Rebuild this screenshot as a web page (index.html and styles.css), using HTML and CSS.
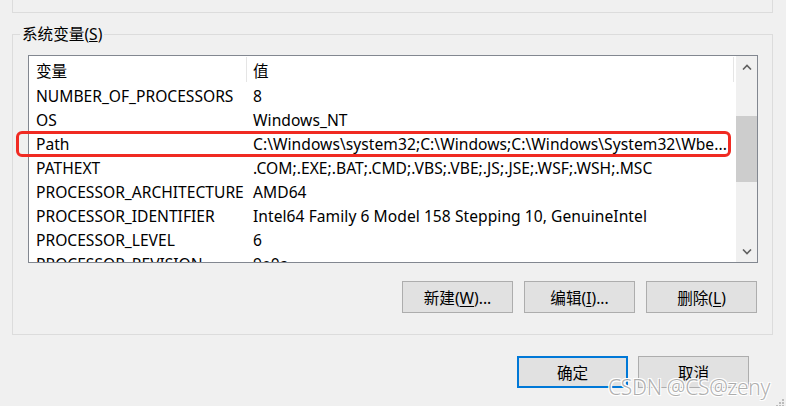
FILE: index.html
```html
<!DOCTYPE html>
<html lang="zh-CN">
<head>
<meta charset="utf-8">
<title>系统变量</title>
<link rel="stylesheet" href="styles.css">
</head>
<body>
<div class="dialog">
  <div class="top-box"></div>

  <section class="group">
    <div class="group-title">系统变量(<u>S</u>)</div>

    <div class="list">
      <div class="list-body">
        <div class="list-head">
          <div class="hcell">变量</div>
          <div class="hcell">值</div>
        </div>
        <div class="row"><div class="c1">NUMBER_OF_PROCESSORS</div><div class="c2">8</div></div>
        <div class="row"><div class="c1">OS</div><div class="c2">Windows_NT</div></div>
        <div class="row"><div class="c1">Path</div><div class="c2">C:\Windows\system32;C:\Windows;C:\Windows\System32\Wbe...</div></div>
        <div class="row"><div class="c1">PATHEXT</div><div class="c2">.COM;.EXE;.BAT;.CMD;.VBS;.VBE;.JS;.JSE;.WSF;.WSH;.MSC</div></div>
        <div class="row"><div class="c1">PROCESSOR_ARCHITECTURE</div><div class="c2">AMD64</div></div>
        <div class="row"><div class="c1">PROCESSOR_IDENTIFIER</div><div class="c2">Intel64 Family 6 Model 158 Stepping 10, GenuineIntel</div></div>
        <div class="row"><div class="c1">PROCESSOR_LEVEL</div><div class="c2">6</div></div>
        <div class="row"><div class="c1">PROCESSOR_REVISION</div><div class="c2">9e0a</div></div>
      </div>
      <div class="scrollbar">
        <div class="sb-arrow">
          <svg width="10" height="6" viewBox="0 0 10 6"><path d="M1 5.5 L5 1.5 L9 5.5" fill="none" stroke="#606060" stroke-width="1.6"/></svg>
        </div>
        <div class="sb-track">
          <div class="sb-thumb"></div>
        </div>
        <div class="sb-arrow">
          <svg width="10" height="6" viewBox="0 0 10 6"><path d="M1 0.5 L5 4.5 L9 0.5" fill="none" stroke="#606060" stroke-width="1.6"/></svg>
        </div>
      </div>
      <div class="highlight"></div>
    </div>

    <div class="btn-row">
      <button class="btn">新建(<u>W</u>)...</button>
      <button class="btn">编辑(<u>I</u>)...</button>
      <button class="btn">删除(<u>L</u>)</button>
    </div>
  </section>

  <div class="footer">
    <button class="btn btn-default">确定</button>
    <button class="btn">取消</button>
  </div>

  <div class="watermark">CSDN @CS@zeny</div>
  <div class="grip">
    <svg width="12" height="12" viewBox="0 0 12 12">
      <g fill="#bcbcbc">
        <rect x="9" y="0" width="2" height="2"/>
        <rect x="6" y="3" width="2" height="2"/><rect x="9" y="3" width="2" height="2"/>
        <rect x="3" y="6" width="2" height="2"/><rect x="6" y="6" width="2" height="2"/><rect x="9" y="6" width="2" height="2"/>
        <rect x="0" y="9" width="2" height="2"/><rect x="3" y="9" width="2" height="2"/><rect x="6" y="9" width="2" height="2"/><rect x="9" y="9" width="2" height="2"/>
      </g>
    </svg>
  </div>
</div>
</body>
</html>
```
FILE: styles.css
```css
* { box-sizing: border-box; }

html, body {
  margin: 0;
  padding: 0;
  background: #f0f0f0;
}

body {
  font-family: "Noto Sans", "Noto Sans CJK SC", sans-serif;
  font-size: 15.6px;
  color: #000;
}

.dialog {
  position: relative;
  width: 786px;
  height: 406px;
  overflow: hidden;
}

.top-box {
  height: 13px;
  margin: 0 13px 0 12px;
  border: 1px solid #dcdcdc;
  border-top: none;
}

.group {
  margin: 21px 13px 0 12px;
  border: 1px solid #dcdcdc;
  padding-bottom: 21px;
}

.group-title {
  width: fit-content;
  margin: -11px 0 0 7px;
  padding: 0 2px;
  line-height: 20px;
  background: #f0f0f0;
}

.list {
  position: relative;
  display: flex;
  height: 208px;
  margin: 11px 14px 0 15px;
  border: 1px solid #828790;
  background: #fff;
}

.list-body {
  flex: 1;
  overflow: hidden;
  white-space: nowrap;
}

.list-head {
  display: grid;
  grid-template-columns: 218px 487px;
  height: 27px;
  align-items: center;
}

.hcell {
  height: 25px;
  line-height: 28px;
  padding-left: 7px;
  border-right: 1px solid #e5e5e5;
}
.hcell + .hcell { padding-left: 6px; }

.row {
  display: grid;
  grid-template-columns: 218px 1fr;
  height: 24px;
  line-height: 26px;
  overflow: hidden;
}

.c1 { padding-left: 7px; }
.c2 { padding-left: 6px; overflow: hidden; letter-spacing: 0.05px; }

.scrollbar {
  width: 21px;
  display: flex;
  flex-direction: column;
  background: #f0f0f0;
}

.sb-arrow {
  height: 21px;
  display: flex;
  align-items: center;
  justify-content: center;
}

.sb-track {
  flex: 1;
  padding-top: 39px;
}

.sb-thumb {
  height: 66px;
  background: #cdcdcd;
}

.highlight {
  position: absolute;
  left: -13px;
  top: 75px;
  width: 715px;
  height: 26px;
  border: 3px solid #f02a22;
  border-radius: 6px;
}

.btn-row {
  display: flex;
  justify-content: flex-end;
  gap: 11px;
  margin: 18px 15px 0 0;
}

.btn {
  width: 111px;
  height: 32px;
  background: #e1e1e1;
  border: 1px solid #adadad;
  font-family: "Noto Sans", "Noto Sans CJK SC", sans-serif;
  font-size: 15.6px;
  color: #000;
  padding: 0;
}

.btn u { text-underline-offset: 2px; }

.footer {
  display: flex;
  justify-content: flex-end;
  gap: 10px;
  margin: 21px 37px 0 0;
}

.btn-default {
  border: 2px solid #0078d7;
}

.watermark {
  position: absolute;
  right: 16px;
  bottom: 5px;
  font-family: "Noto Sans", sans-serif;
  font-size: 21px;
  font-weight: 300;
  letter-spacing: -0.3px;
  color: rgba(150, 150, 150, 0.75);
  text-shadow: 1px 1px 0 #fff, -1px -1px 0 #fff, 1px -1px 0 #fff, -1px 1px 0 #fff;
}

.grip {
  position: absolute;
  right: 1px;
  bottom: 0px;
  width: 12px;
  height: 12px;
}
```
